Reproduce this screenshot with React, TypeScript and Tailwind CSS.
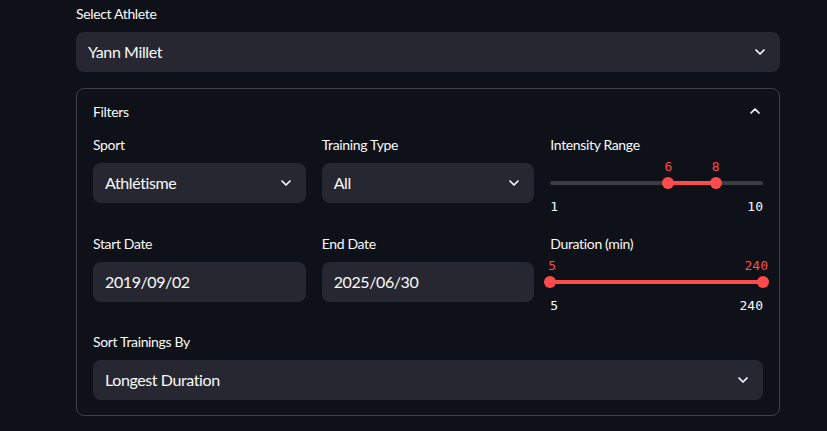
import React from "react";

const font = { fontFamily: "'Source Sans Pro', 'Lato', 'Noto Sans', sans-serif" };

const ChevronDown = () => (
  <svg width="16" height="16" viewBox="0 0 24 24" fill="none" stroke="#fafafa" strokeWidth="2.6" strokeLinecap="round" strokeLinejoin="round">
    <path d="M6 9l6 6 6-6" />
  </svg>
);

const ChevronUp = () => (
  <svg width="16" height="16" viewBox="0 0 24 24" fill="none" stroke="#fafafa" strokeWidth="2.6" strokeLinecap="round" strokeLinejoin="round">
    <path d="M6 15l6-6 6 6" />
  </svg>
);

const Label: React.FC<{ text: string }> = ({ text }) => (
  <div className="text-[14px] leading-[20px] text-[#fafafa] mb-[8px] tracking-tight">{text}</div>
);

const SelectBox: React.FC<{ value: string }> = ({ value }) => (
  <div className="h-[40px] rounded-[8px] bg-[#262730] flex items-center justify-between pl-[12px] pr-[12px] text-[16px] text-[#fafafa] tracking-tight">
    <span>{value}</span>
    <ChevronDown />
  </div>
);

const DateBox: React.FC<{ value: string }> = ({ value }) => (
  <div className="h-[40px] rounded-[8px] bg-[#262730] flex items-center pl-[12px] text-[16px] text-[#fafafa] tracking-tight">
    {value}
  </div>
);

const RangeSlider: React.FC<{ min: number; max: number; lo: number; hi: number }> = ({ min, max, lo, hi }) => {
  const p1 = ((lo - min) / (max - min)) * 100;
  const p2 = ((hi - min) / (max - min)) * 100;
  const mono = { fontFamily: "'DejaVu Sans Mono', 'Liberation Mono', monospace" };
  return (
    <div>
      <div className="relative h-[22px]" style={mono}>
        <span
          className="absolute top-[2px] text-[13px] text-[#ff4b4b]"
          style={p1 === 0 ? { left: -2 } : { left: `${p1}%`, transform: "translateX(-50%)" }}
        >
          {lo}
        </span>
        <span
          className="absolute top-[2px] text-[13px] text-[#ff4b4b]"
          style={p2 === 100 ? { right: -5 } : { left: `${p2}%`, transform: "translateX(-50%)" }}
        >
          {hi}
        </span>
      </div>
      <div className="relative h-[12px] flex items-center">
        <div className="h-[4px] w-full rounded-full bg-[#3b3d45]" />
        <div className="absolute h-[4px] bg-[#ff4b4b]" style={{ left: `${p1}%`, width: `${p2 - p1}%` }} />
        <div className="absolute w-[12px] h-[12px] rounded-full bg-[#ff4b4b] -translate-x-1/2" style={{ left: `${p1}%` }} />
        <div className="absolute w-[12px] h-[12px] rounded-full bg-[#ff4b4b] -translate-x-1/2" style={{ left: `${p2}%` }} />
      </div>
      <div className="flex justify-between text-[13px] text-[#fafafa] mt-[8px]" style={mono}>
        <span>{min}</span>
        <span>{max}</span>
      </div>
    </div>
  );
};

export default function App() {
  return (
    <div className="w-[827px] h-[431px] bg-[#0e1117] overflow-hidden" style={font}>
      <div className="mx-[76px] w-[704px] pt-[4px]">
        <Label text="Select Athlete" />
        <SelectBox value="Yann Millet" />

        <div className="mt-[16px] border border-[#3d4047] rounded-[8px] px-[16px] pb-[15px]">
          <div className="h-[44px] flex items-center justify-between text-[14px] text-[#fafafa] tracking-tight">
            <span>Filters</span>
            <ChevronUp />
          </div>

          <div className="grid grid-cols-3 gap-x-[16px] mt-[2px]">
            <div>
              <Label text="Sport" />
              <SelectBox value="Athlétisme" />
            </div>
            <div>
              <Label text="Training Type" />
              <SelectBox value="All" />
            </div>
            <div>
              <Label text="Intensity Range" />
              <div className="mt-[-8px]">
                <RangeSlider min={1} max={10} lo={6} hi={8} />
              </div>
            </div>
          </div>

          <div className="grid grid-cols-3 gap-x-[16px] mt-[17px]">
            <div>
              <Label text="Start Date" />
              <DateBox value="2019/09/02" />
            </div>
            <div>
              <Label text="End Date" />
              <DateBox value="2025/06/30" />
            </div>
            <div>
              <Label text="Duration (min)" />
              <div className="mt-[-8px]">
                <RangeSlider min={5} max={240} lo={5} hi={240} />
              </div>
            </div>
          </div>

          <div className="mt-[17px]">
            <Label text="Sort Trainings By" />
            <SelectBox value="Longest Duration" />
          </div>
        </div>
      </div>
    </div>
  );
}
